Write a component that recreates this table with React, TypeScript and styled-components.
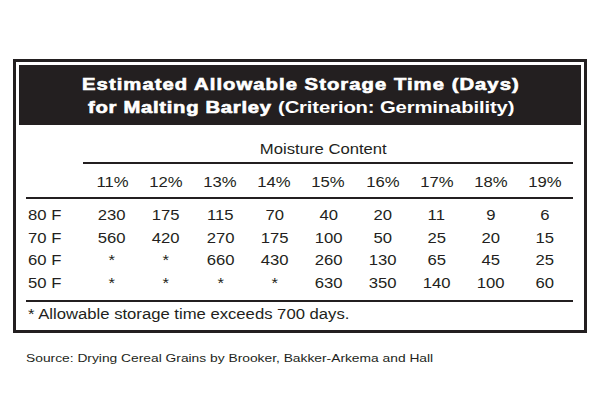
import React from "react";
import styled, { createGlobalStyle } from "styled-components";

const Global = createGlobalStyle`
  html, body { margin: 0; padding: 0; background: #fff; }
  body { font-family: "Liberation Sans", Arial, sans-serif; color: #231f20; }
`;

const Page = styled.div`
  width: 600px;
  height: 400px;
  padding: 59px 0 0 13px;
  box-sizing: border-box;
`;

const Frame = styled.div`
  width: 574px;
  height: 274px;
  box-sizing: border-box;
  border: 3px solid #231f20;
  padding: 3px;
  display: flex;
  flex-direction: column;
`;

const Header = styled.div`
  height: 60px;
  background: #231f20;
  color: #fff;
  display: flex;
  flex-direction: column;
  align-items: center;
  justify-content: center;
  padding-top: 1px;
  box-sizing: border-box;
`;

/* Wide text: glyphs are widened horizontally like the printed table */
const Wide = styled.span<{ $origin?: "left" | "center" }>`
  display: inline-block;
  white-space: nowrap;
  transform: scaleX(1.19);
  transform-origin: ${(p) => (p.$origin === "left" ? "left center" : "center center")};
`;

const TitleLine = styled.div`
  font-size: 17px;
  line-height: 23px;
  font-weight: 700;
  white-space: nowrap;
  margin-left: 2px;
`;

const Heavy = styled.span<{ $tight?: boolean }>`
  letter-spacing: ${(p) => (p.$tight ? "0.6px" : "0.88px")};
  -webkit-text-stroke: 0.65px #fff;
`;

const Light = styled.span`
  letter-spacing: -0.1px;
`;

const Body = styled.div`
  padding: 0 8px 0 7px;
`;

const Grid = styled.div`
  display: grid;
  grid-template-columns: 59px repeat(9, 54.1px) 1fr;
`;

const Span = styled.div`
  grid-column: 2 / -1;
  text-align: center;
  font-size: 14px;
  line-height: 20px;
  margin-top: 14px;
  padding-right: 10px;
  padding-bottom: 3px;
  border-bottom: 2px solid #231f20;
  margin-left: -2px;
`;

const Cell = styled.div<{ $label?: boolean; $head?: boolean }>`
  font-size: 14px;
  line-height: ${(p) => (p.$head ? "20px" : "22.7px")};
  text-align: ${(p) => (p.$label ? "left" : "center")};
  padding-left: ${(p) => (p.$label ? "2px" : "0")};
  white-space: nowrap;
`;

const HeadRow = styled.div`
  grid-column: 1 / -1;
  display: grid;
  grid-template-columns: subgrid;
  padding-top: 8px;
  padding-bottom: 5px;
  border-bottom: 2px solid #231f20;
`;

const Rows = styled.div`
  grid-column: 1 / -1;
  display: grid;
  grid-template-columns: subgrid;
  padding-top: 5px;
  padding-bottom: 5px;
  border-bottom: 2px solid #231f20;
`;

const Note = styled.div`
  font-size: 14px;
  line-height: 20px;
  padding: 2px 0 0 2px;
`;

const Source = styled.div`
  font-size: 11.6px;
  line-height: 16px;
  margin: 17px 0 0 13px;
`;

const pct = ["11%", "12%", "13%", "14%", "15%", "16%", "17%", "18%", "19%"];
const data: [string, string[]][] = [
  ["80 F", ["230", "175", "115", "70", "40", "20", "11", "9", "6"]],
  ["70 F", ["560", "420", "270", "175", "100", "50", "25", "20", "15"]],
  ["60 F", ["*", "*", "660", "430", "260", "130", "65", "45", "25"]],
  ["50 F", ["*", "*", "*", "*", "630", "350", "140", "100", "60"]],
];

export default function App() {
  return (
    <>
      <Global />
      <Page>
        <Frame>
          <Header>
            <TitleLine>
              <Wide>
                <Heavy>Estimated Allowable Storage Time (Days)</Heavy>
              </Wide>
            </TitleLine>
            <TitleLine>
              <Wide>
                <Heavy $tight>for Malting Barley </Heavy>
                <Light>(Criterion: Germinability)</Light>
              </Wide>
            </TitleLine>
          </Header>
          <Body>
            <Grid>
              <Span>
                <Wide>Moisture Content</Wide>
              </Span>
              <HeadRow>
                <Cell $head />
                {pct.map((p) => (
                  <Cell $head key={p}>
                    <Wide>{p}</Wide>
                  </Cell>
                ))}
                <Cell $head />
              </HeadRow>
              <Rows>
                {data.map(([label, vals]) => (
                  <React.Fragment key={label}>
                    <Cell $label>
                      <Wide $origin="left">{label}</Wide>
                    </Cell>
                    {vals.map((v, i) => (
                      <Cell key={i}>
                        <Wide>{v}</Wide>
                      </Cell>
                    ))}
                    <Cell />
                  </React.Fragment>
                ))}
              </Rows>
            </Grid>
            <Note>
              <Wide $origin="left">* Allowable storage time exceeds 700 days.</Wide>
            </Note>
          </Body>
        </Frame>
        <Source>
          <Wide $origin="left">Source: Drying Cereal Grains by Brooker, Bakker-Arkema and Hall</Wide>
        </Source>
      </Page>
    </>
  );
}
